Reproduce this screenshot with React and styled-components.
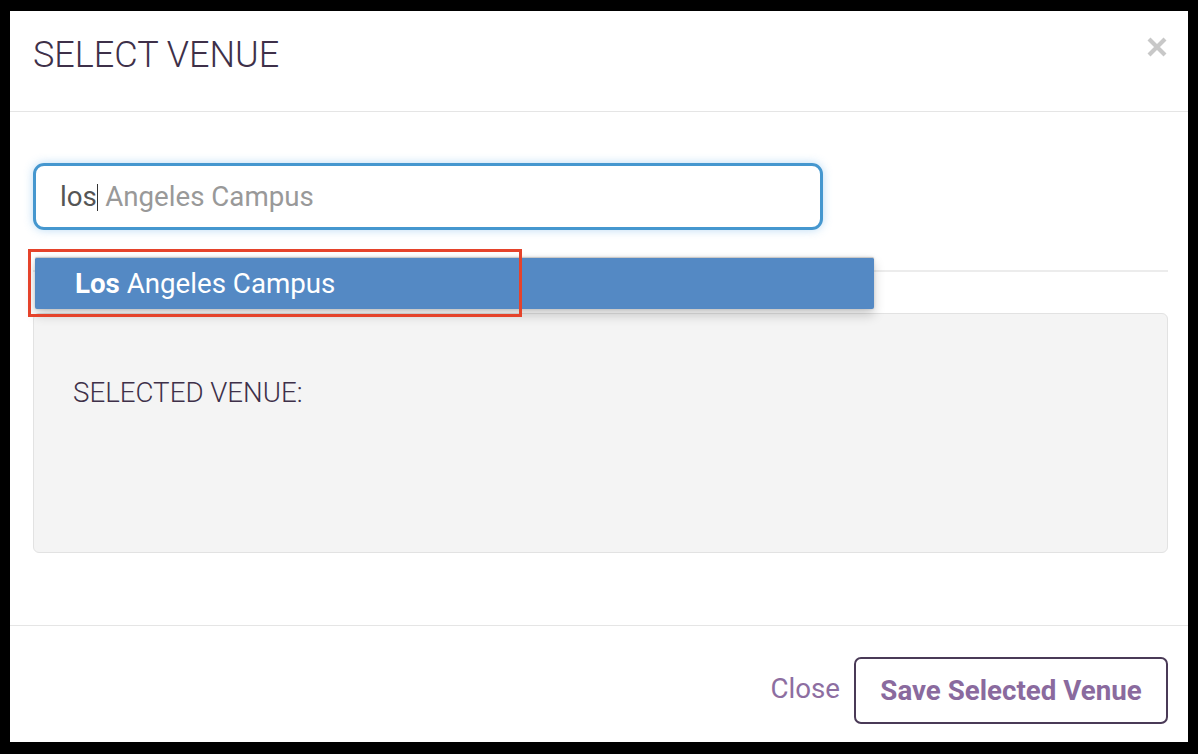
import React from "react";
import styled, { createGlobalStyle } from "styled-components";

const GlobalStyle = createGlobalStyle`
  html, body { margin: 0; padding: 0; background: #000; }
  body { font-family: Roboto, "Liberation Sans", sans-serif; }
  * { box-sizing: border-box; }
`;

const Frame = styled.div`
  height: 754px;
  padding: 11px 10px 12px 10px;
`;

const Modal = styled.div`
  height: 100%;
  background: #fff;
  display: flex;
  flex-direction: column;
`;

const Header = styled.div`
  position: relative;
  height: 101px;
  border-bottom: 1px solid #e5e5e5;
  padding: 26px 0 0 23px;
`;

const Title = styled.h4`
  margin: 0;
  font-size: 36px;
  line-height: 1;
  font-weight: 300;
  color: #3e3049;
`;

const CloseX = styled.button`
  position: absolute;
  top: 26px;
  right: 21px;
  width: 20px;
  height: 20px;
  padding: 0;
  border: 0;
  background: none;
  cursor: pointer;
  display: flex;
`;

const Body = styled.div`
  flex: 1;
  padding: 51px 20px 0 23px;
  border-bottom: 1px solid #e5e5e5;
`;

const SearchWrap = styled.div`
  position: relative;
  width: 790px;
`;

const InputBox = styled.div`
  height: 67px;
  border: 3px solid #4597cf;
  border-radius: 11px;
  box-shadow: 0 0 10px rgba(102, 175, 233, 0.45);
  padding: 0 24px;
  display: flex;
  align-items: center;
  font-size: 27.7px;
  white-space: pre;
`;

const InputText = styled.div`
  line-height: 1;
`;

const Typed = styled.span`
  color: #555;
`;

const Caret = styled.span`
  display: inline-block;
  width: 1.5px;
  height: 27px;
  background: #333;
  vertical-align: -5px;
`;

const Hint = styled.span`
  color: #999;
`;

const Menu = styled.div`
  position: absolute;
  top: 94px;
  left: 2px;
  width: 839px;
  height: 52px;
  background: #5489c4;
  border-top: 1px solid #c9c9c9;
  box-shadow: 0 6px 12px rgba(0, 0, 0, 0.2), 0 0 3px rgba(0,0,0,0.15);
  border-radius: 2px;
  padding: 0 40px;
  display: flex;
  align-items: center;
  font-size: 27.7px;
  color: #fff;
  z-index: 2;
`;

const Match = styled.strong`
  font-weight: 700;
`;

const Highlight = styled.div`
  position: absolute;
  top: 86px;
  left: -5px;
  width: 494px;
  height: 68px;
  border: 3px solid #e5432b;
  z-index: 3;
  pointer-events: none;
`;

const Rule = styled.hr`
  margin: 40px 0 0;
  border: 0;
  border-top: 2px solid #ececec;
`;

const Panel = styled.div`
  margin-top: 41px;
  height: 240px;
  background: #f4f4f4;
  border: 1px solid #e2e2e2;
  border-radius: 6px;
  padding: 65px 40px 0 39px;
`;

const PanelLabel = styled.div`
  font-size: 27.7px;
  line-height: 1;
  font-weight: 300;
  color: #3e3049;
`;

const Footer = styled.div`
  height: 116px;
  display: flex;
  justify-content: flex-end;
  align-items: flex-start;
  padding: 31px 20px 0 0;
`;

const LinkButton = styled.button`
  border: 0;
  background: none;
  padding: 0;
  margin: 0 14px 0 0;
  height: 63px;
  font-family: inherit;
  font-size: 27.7px;
  color: #8d6ea1;
  cursor: pointer;
`;

const OutlineButton = styled.button`
  width: 314px;
  height: 67px;
  border: 2px solid #4a3a57;
  border-radius: 7px;
  background: #fff;
  font-family: inherit;
  font-size: 27.7px;
  font-weight: 700;
  color: #8a6a9e;
  cursor: pointer;
`;

export default function App() {
  return (
    <>
      <GlobalStyle />
      <Frame>
        <Modal>
          <Header>
            <Title>SELECT VENUE</Title>
            <CloseX aria-label="Close">
              <svg width="20" height="20" viewBox="0 0 20 20">
                <path d="M2 2 L18 18 M18 2 L2 18" stroke="#c8c8c8" strokeWidth="4.2" strokeLinecap="butt" />
              </svg>
            </CloseX>
          </Header>
          <Body>
            <SearchWrap>
              <InputBox>
                <InputText>
                  <Typed>los</Typed>
                  <Caret />
                  <Hint>{" Angeles Campus"}</Hint>
                </InputText>
              </InputBox>
              <Menu>
                <span>
                  <Match>Los</Match> Angeles Campus
                </span>
              </Menu>
              <Highlight />
            </SearchWrap>
            <Rule />
            <Panel>
              <PanelLabel>SELECTED VENUE:</PanelLabel>
            </Panel>
          </Body>
          <Footer>
            <LinkButton>Close</LinkButton>
            <OutlineButton>Save Selected Venue</OutlineButton>
          </Footer>
        </Modal>
      </Frame>
    </>
  );
}
